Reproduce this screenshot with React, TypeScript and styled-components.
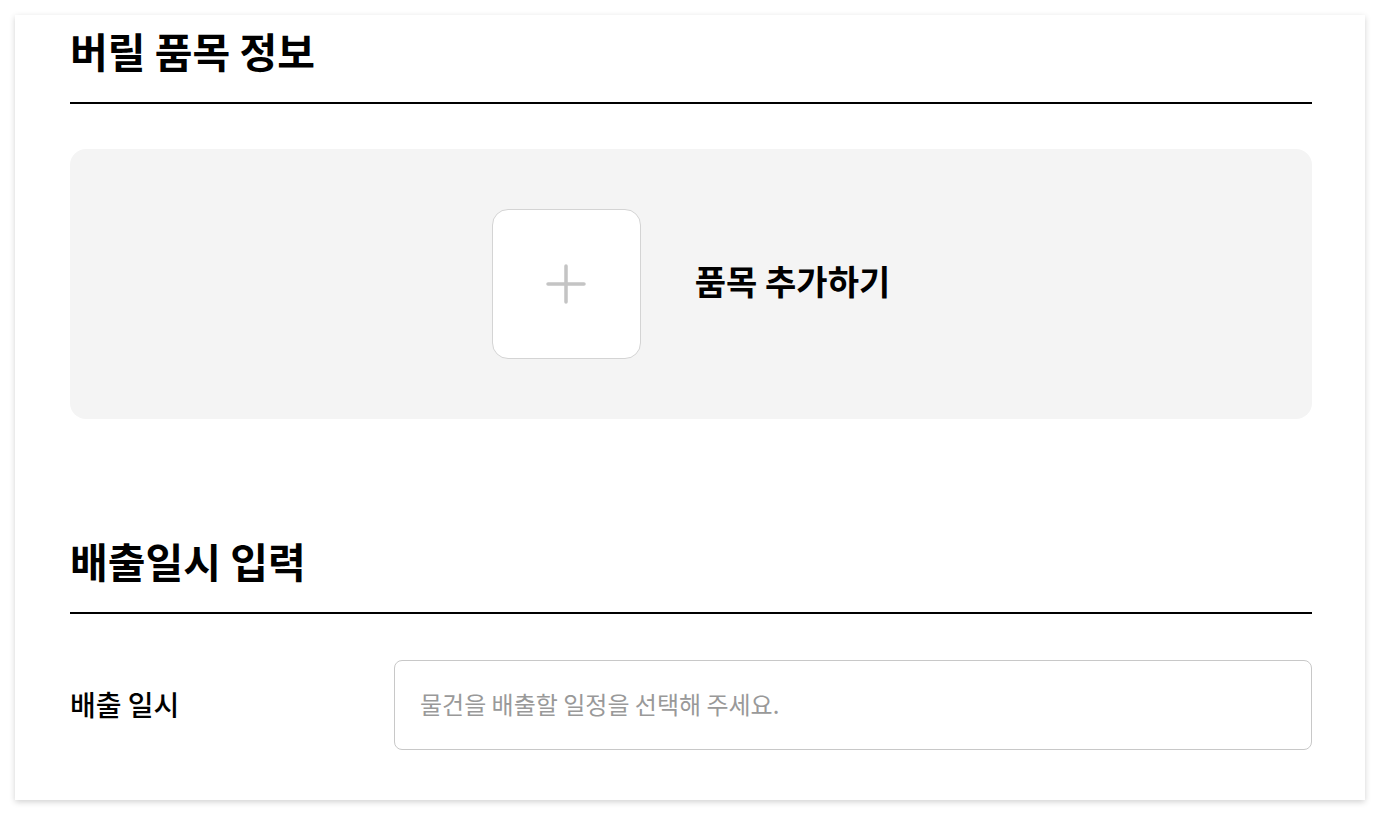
import React from "react";
import styled, { createGlobalStyle } from "styled-components";

const Global = createGlobalStyle`
  html, body { margin: 0; padding: 0; background: #ffffff; }
  body { font-family: "Noto Sans CJK KR", "Noto Sans", sans-serif; color: #000; }
  * { box-sizing: border-box; }
`;

const Page = styled.div`
  padding: 15px;
`;

const Card = styled.div`
  width: 1350px;
  height: 785px;
  background: #fff;
  box-shadow: 0 2px 6px rgba(0, 0, 0, 0.18);
  padding: 9px 53px 0 55px;
  display: flex;
  flex-direction: column;
`;

const Section = styled.section<{ $gap?: number }>`
  display: flex;
  flex-direction: column;
  margin-top: ${(p) => p.$gap ?? 0}px;
`;

const Title = styled.h2`
  margin: 0;
  font-size: 41px;
  font-weight: 700;
  line-height: 52px;
  padding-bottom: 26px;
  border-bottom: 2px solid #000;
`;

const AddPanel = styled.div`
  margin-top: 45px;
  height: 270px;
  background: #f4f4f4;
  border-radius: 16px;
  display: flex;
  align-items: center;
  justify-content: center;
  gap: 54px;
`;

const AddButton = styled.button`
  width: 149px;
  height: 150px;
  background: #fff;
  border: 1px solid #d4d4d4;
  border-radius: 16px;
  display: flex;
  align-items: center;
  justify-content: center;
  padding: 0;
  cursor: pointer;
`;

const AddLabel = styled.span`
  font-size: 34px;
  font-weight: 700;
  margin-bottom: 7px;
`;

const Row = styled.div`
  margin-top: 46px;
  display: flex;
  align-items: center;
`;

const Label = styled.label`
  width: 324px;
  font-size: 28px;
  font-weight: 500;
  margin-bottom: 3px;
`;

const Input = styled.input`
  flex: 1;
  height: 90px;
  border: 1px solid #c8c8c8;
  border-radius: 8px;
  padding: 0 25px 3px;
  font-family: "Noto Sans CJK KR", "Noto Sans", sans-serif;
  font-size: 24px;
  color: #000;
  outline: none;
  &::placeholder { color: #999; }
`;

export default function App() {
  return (
    <>
      <Global />
      <Page>
        <Card>
          <Section>
            <Title>버릴 품목 정보</Title>
            <AddPanel>
              <AddButton aria-label="품목 추가">
                <svg width="40" height="40" viewBox="0 0 40 40">
                  <path d="M20 2 V38 M2 20 H38" stroke="#c4c4c4" strokeWidth="3.5" strokeLinecap="round" />
                </svg>
              </AddButton>
              <AddLabel>품목 추가하기</AddLabel>
            </AddPanel>
          </Section>
          <Section $gap={115}>
            <Title>배출일시 입력</Title>
            <Row>
              <Label>배출 일시</Label>
              <Input placeholder="물건을 배출할 일정을 선택해 주세요." />
            </Row>
          </Section>
        </Card>
      </Page>
    </>
  );
}
